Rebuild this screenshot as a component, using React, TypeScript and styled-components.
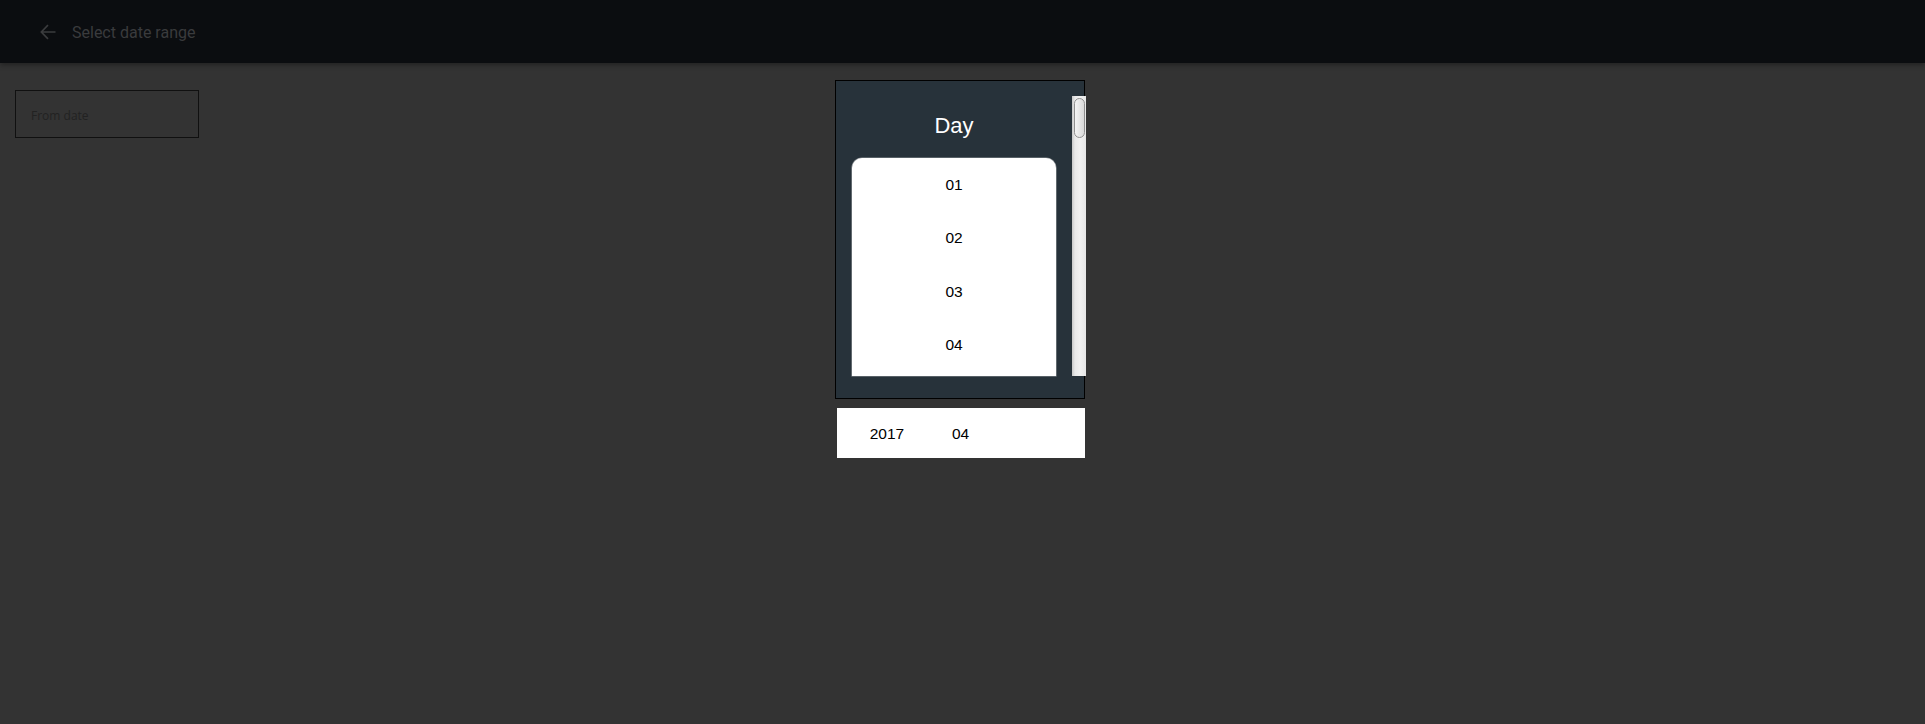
import React from "react";
import styled, { createGlobalStyle } from "styled-components";

const Global = createGlobalStyle`
  html, body { margin: 0; padding: 0; background: #333333; }
  body { font-family: Roboto, "Liberation Sans", sans-serif; }
  #root { min-height: 724px; }
`;

const Page = styled.div`
  min-height: 724px;
  background: #333333;
  display: flex;
  flex-direction: column;
`;

const TopBar = styled.header`
  height: 63px;
  background: #0b0d10;
  display: flex;
  align-items: center;
  padding-left: 36px;
  gap: 12px;
  box-shadow: 0 2px 5px rgba(0, 0, 0, 0.35);
  position: relative;
  z-index: 1;
`;

const BackButton = styled.button`
  width: 24px;
  height: 24px;
  padding: 0;
  border: none;
  background: transparent;
  display: flex;
  align-items: center;
  justify-content: center;
  color: #3b3c3e;
`;

const Title = styled.span`
  font-family: Roboto, "Liberation Sans", sans-serif;
  font-size: 16px;
  color: #3a3b3d;
  margin-top: 1px;
`;

const Content = styled.main`
  display: grid;
  grid-template-columns: 1fr 250px 1fr;
  align-items: start;
  padding-top: 17px;
  padding-right: 5px;
`;

const LeftCol = styled.div`
  padding: 10px 0 0 15px;
`;

const DateField = styled.div`
  width: 167px;
  height: 46px;
  border: 1px solid #101010;
  display: flex;
  align-items: center;
  padding-left: 15px;
  box-sizing: content-box;
`;

const FieldLabel = styled.span`
  font-family: "Open Sans", sans-serif;
  font-size: 12px;
  color: #222222;
  margin-top: 2px;
`;

const PickerCol = styled.div`
  display: flex;
  flex-direction: column;
  gap: 9px;
`;

const Picker = styled.div`
  width: 250px;
  height: 319px;
  box-sizing: border-box;
  border: 1px solid #000;
  background: #27323a;
  display: flex;
  flex-direction: column;
  align-items: stretch;
  padding: 15px 0 0 16px;
`;

const PickerTitle = styled.div`
  font-family: "Liberation Sans", Arial, sans-serif;
  font-size: 22px;
  color: #fff;
  text-align: center;
  width: 204px;
  height: 30px;
  line-height: 30px;
  margin-top: 15px;
`;

const ListRow = styled.div`
  display: flex;
  align-items: flex-start;
  margin-top: -45px;
`;

const ListArea = styled.div`
  display: flex;
  flex-direction: column;
  padding-top: 62px;
`;

const List = styled.ul`
  list-style: none;
  margin: 0;
  padding: 0;
  width: 204px;
  height: 218px;
  background: #fff;
  border-radius: 10px 10px 0 0;
  box-shadow: 0 0 0 0.6px #8a8f93;
  overflow: hidden;
`;

const ListItem = styled.li`
  height: 53.3px;
  display: flex;
  align-items: center;
  justify-content: center;
  font-family: "Liberation Sans", Arial, sans-serif;
  font-size: 15.5px;
  color: #000;
  padding-top: 1px;
  box-sizing: border-box;
`;

const ScrollTrack = styled.div`
  width: 14px;
  height: 280px;
  margin-left: 16px;
  background: linear-gradient(to right, #c9c9c9 0, #e9e9e9 3px, #f1f1f1 8px, #e6e6e6 14px);
  position: relative;
  margin-right: -2px;
`;

const ScrollThumb = styled.div`
  position: absolute;
  left: 2px;
  top: 2px;
  width: 9px;
  height: 38px;
  border-radius: 6px;
  border: 1px solid #8f8f8f;
  background: linear-gradient(to right, #f4f4f4, #d9d9d9);
`;

const Footer = styled.div`
  width: 248px;
  height: 50px;
  margin-left: 2px;
  background: #fff;
  display: flex;
  align-items: center;
  font-family: "Liberation Sans", Arial, sans-serif;
  font-size: 15.5px;
  color: #000;
`;

const FooterValue = styled.span<{ $w: number }>`
  width: ${(p) => p.$w}px;
  text-align: center;
  padding-top: 1px;
`;

const days = ["01", "02", "03", "04"];

export default function App() {
  return (
    <>
      <Global />
      <Page>
        <TopBar>
          <BackButton aria-label="Back">
            <svg width="20" height="20" viewBox="0 0 24 24" fill="none">
              <path
                d="M20 12H4.8M11.3 4.5 4 12l7.3 7.5"
                stroke="currentColor"
                strokeWidth="2"
                strokeLinecap="square"
              />
            </svg>
          </BackButton>
          <Title>Select date range</Title>
        </TopBar>
        <Content>
          <LeftCol>
            <DateField>
              <FieldLabel>From date</FieldLabel>
            </DateField>
          </LeftCol>
          <PickerCol>
            <Picker>
              <PickerTitle>Day</PickerTitle>
              <ListRow>
                <ListArea>
                  <List>
                    {days.map((d) => (
                      <ListItem key={d}>{d}</ListItem>
                    ))}
                  </List>
                </ListArea>
                <ScrollTrack>
                  <ScrollThumb />
                </ScrollTrack>
              </ListRow>
            </Picker>
            <Footer>
              <FooterValue $w={100}>2017</FooterValue>
              <FooterValue $w={47}>04</FooterValue>
            </Footer>
          </PickerCol>
          <div />
        </Content>
      </Page>
    </>
  );
}
